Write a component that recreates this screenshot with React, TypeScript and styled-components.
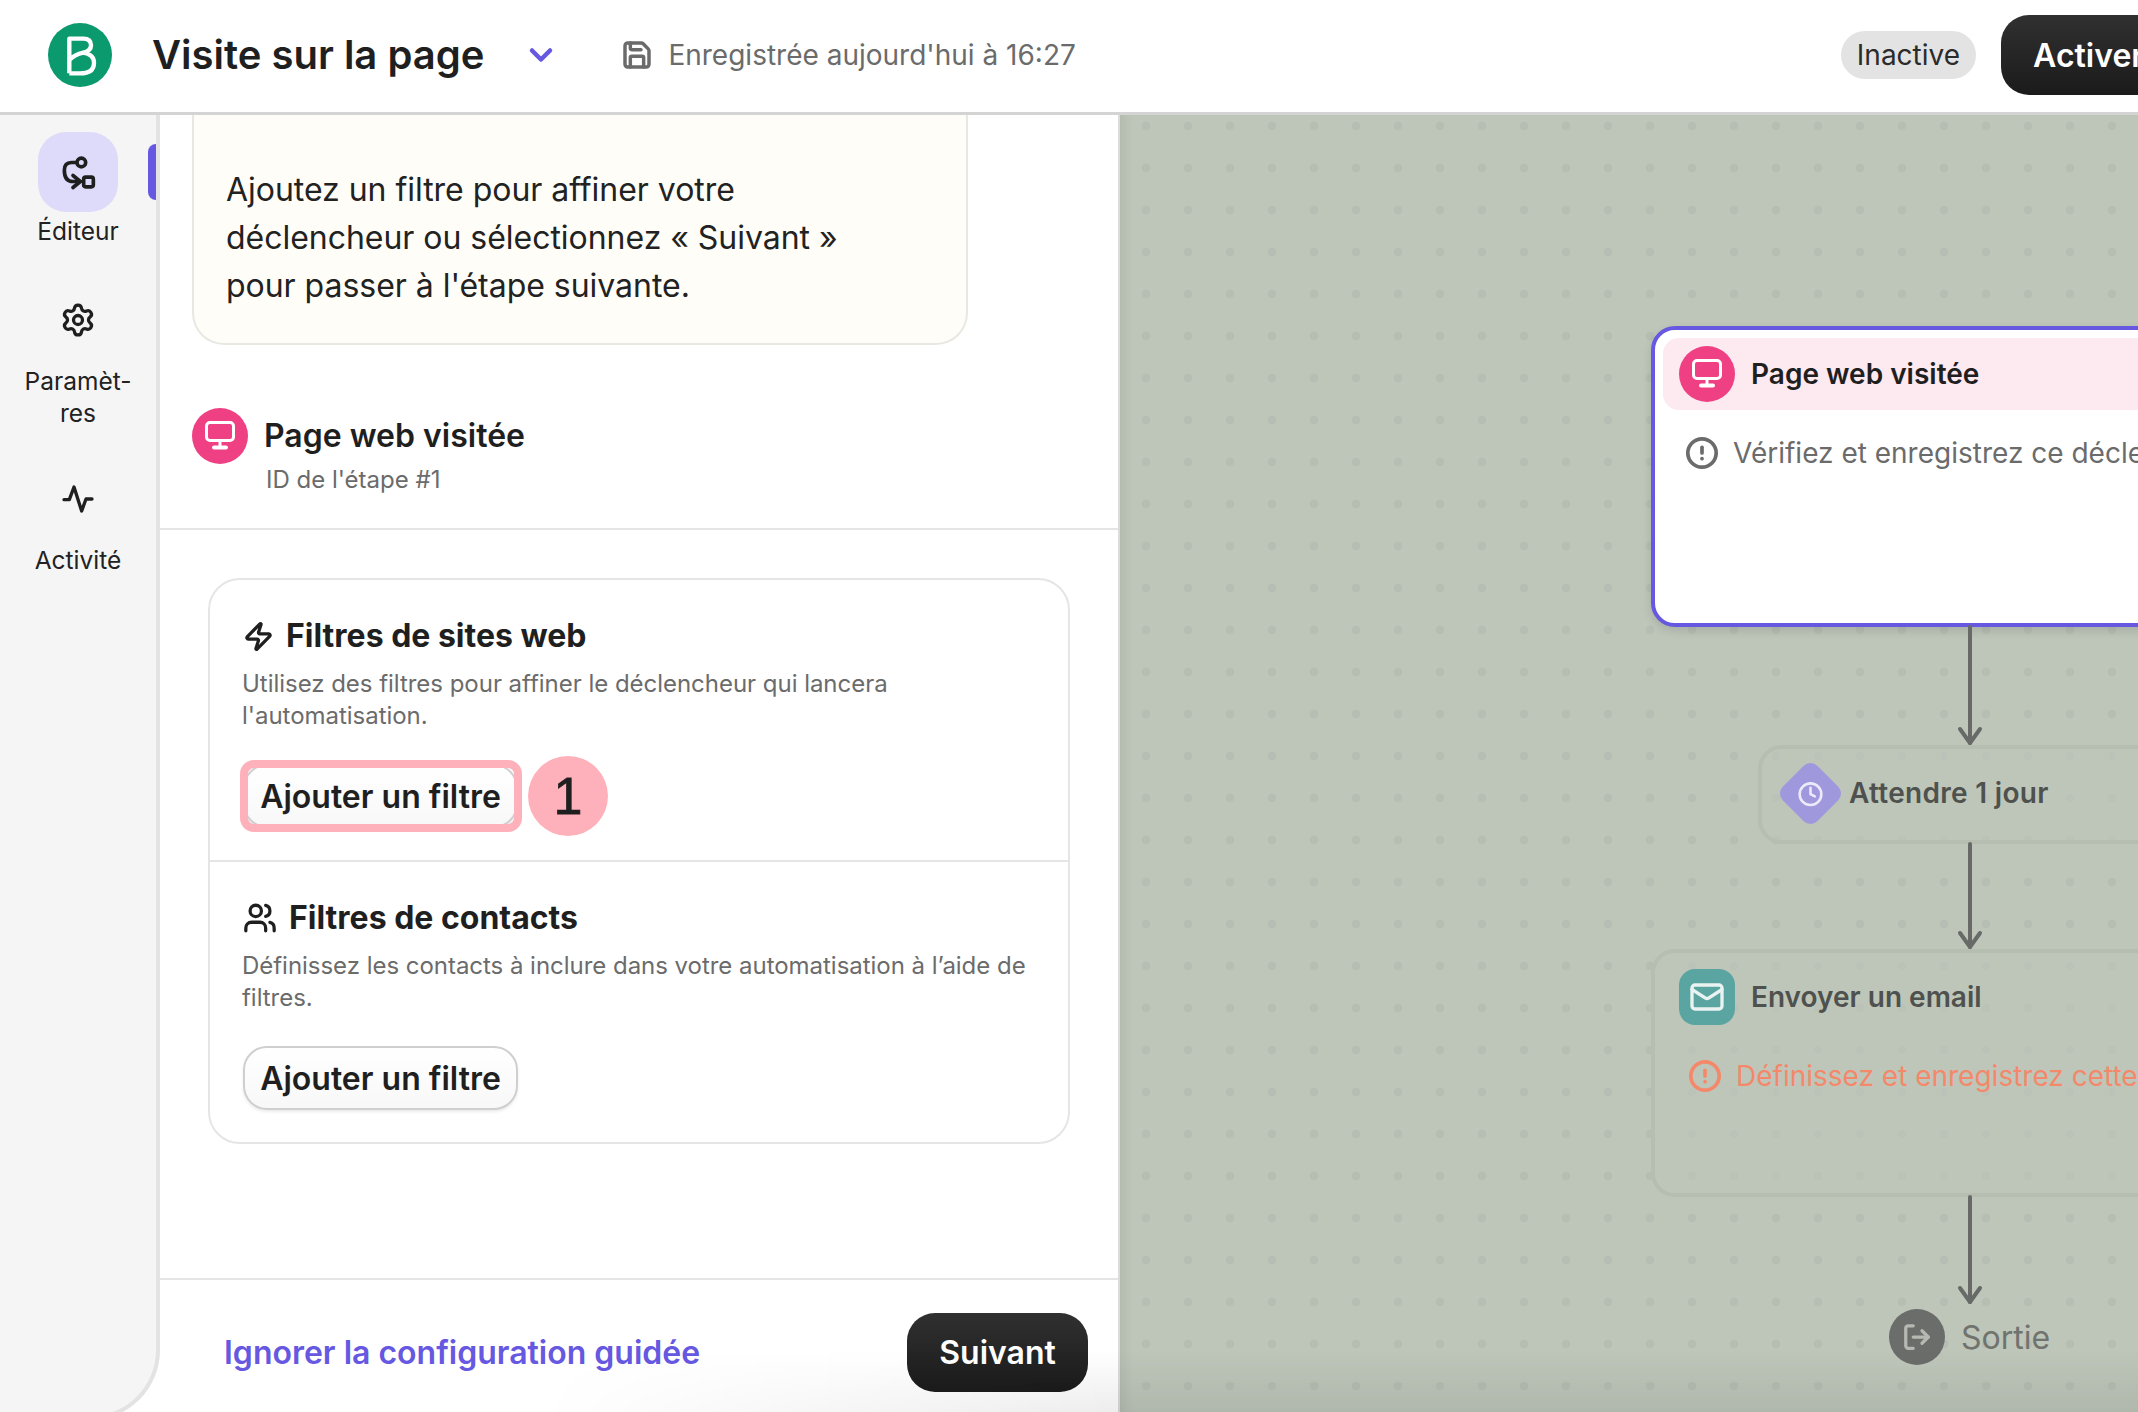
import styled, { createGlobalStyle } from "styled-components";
import { ChevronDown, CircleAlert, Clock, LogOut, Mail, Save, Settings, Users, Zap } from "lucide-react";

const GlobalStyle = createGlobalStyle`
  html, body {
    margin: 0;
    padding: 0;
    background: #fff;
  }
  body {
    font-family: Inter, "Liberation Sans", sans-serif;
    color: #1f1f1f;
  }
  * {
    box-sizing: border-box;
  }
`;

const Page = styled.div`
  position: relative;
  width: 2138px;
  height: 1412px;
  overflow: hidden;
  display: flex;
  flex-direction: column;
`;

const Header = styled.header`
  flex: none;
  height: 115px;
  padding: 0 0 2px 48px;
  display: flex;
  align-items: center;
  background: #fff;
  border-bottom: 3px solid #d4d4d4;
`;

const LogoMark = styled.svg`
  width: 64px;
  height: 64px;
  flex: none;
`;

const PageTitle = styled.h1`
  margin: 0 0 0 40px;
  font-size: 40px;
  line-height: 48px;
  font-weight: 600;
  white-space: nowrap;
`;

const TitleChevron = styled.span`
  display: flex;
  margin-left: 39px;
  color: #6658e0;
`;

const SavedState = styled.div`
  display: flex;
  align-items: center;
  gap: 15px;
  margin-left: 62px;
  font-size: 28px;
  color: #6b6b6b;
  white-space: nowrap;
`;

const HeaderActions = styled.div`
  display: flex;
  align-items: center;
  gap: 25px;
  margin-left: auto;
  margin-right: -38px;
`;

const StatusPill = styled.span`
  height: 48px;
  padding: 0 16px;
  display: flex;
  align-items: center;
  border-radius: 24px;
  background: #e3e3e3;
  font-size: 28px;
  color: #2b2b2b;
`;

const DarkButton = styled.button`
  border: none;
  color: #fff;
  font-family: inherit;
  font-size: 32px;
  font-weight: 600;
  border-radius: 28px;
  background: linear-gradient(#303030, #1b1b1b);
`;

const ActivateButton = styled(DarkButton)`
  height: 80px;
  padding: 0 32px;
`;

const Body = styled.div`
  flex: 1;
  min-height: 0;
  display: flex;
`;

const Sidebar = styled.nav`
  flex: none;
  width: 160px;
  height: 1305px;
  padding-top: 17px;
  display: flex;
  flex-direction: column;
  gap: 30px;
  background: #f5f5f5;
  border-right: 4px solid #e3e3e3;
  border-bottom: 4px solid #e3e3e3;
  border-bottom-right-radius: 70px;
`;

const NavItem = styled.div`
  position: relative;
  display: flex;
  flex-direction: column;
  align-items: center;

  &:first-child {
    margin-bottom: 3px;
  }
`;

const NavIcon = styled.div<{ $active?: boolean }>`
  width: 80px;
  height: 80px;
  display: flex;
  align-items: center;
  justify-content: center;
  border-radius: 28px;
  background: ${(props) => (props.$active ? "#dddbf9" : "transparent")};
  color: #1f1f1f;
`;

const NavLabel = styled.span<{ $tight?: boolean }>`
  margin-top: ${(props) => (props.$tight ? 3 : 5)}px;
  font-size: 24.5px;
  line-height: 32px;
  text-align: center;
  color: #222;
`;

const ActiveMark = styled.span`
  position: absolute;
  right: 0;
  top: 12px;
  width: 8px;
  height: 56px;
  border-radius: 8px 0 0 8px;
  background: #6658e0;
`;

const Panel = styled.main`
  flex: none;
  width: 960px;
  display: flex;
  flex-direction: column;
  background: #fff;
  border-right: 2px solid #dcdcdc;
`;

const PanelScroll = styled.div`
  flex: 1;
  min-height: 0;
`;

const HintCard = styled.div`
  width: 776px;
  height: 230px;
  margin-left: 32px;
  padding: 51px 30px 0 32px;
  background: #fffdf7;
  border: 2px solid #e8e8e3;
  border-top: none;
  border-radius: 0 0 32px 32px;
  font-size: 32px;
  line-height: 48px;
  letter-spacing: -0.03px;
  color: #222;
`;

const StepHead = styled.div`
  margin-top: 63px;
  padding: 0 0 32px 32px;
  display: grid;
  grid-template-columns: 56px 1fr;
  column-gap: 16px;
  border-bottom: 2px solid #e5e5e5;
`;

const StepRound = styled.div`
  width: 56px;
  height: 56px;
  flex: none;
  display: flex;
  align-items: center;
  justify-content: center;
  border-radius: 50%;
  background: #ee4083;
`;

const StepTitle = styled.div`
  font-size: 32px;
  line-height: 56px;
  font-weight: 600;
`;

const StepId = styled.div`
  grid-column: 2;
  margin-left: 2px;
  font-size: 24px;
  line-height: 32px;
  color: #6b6b6b;
`;

const FilterCard = styled.section`
  width: 862px;
  margin: 48px 0 0 48px;
  border: 2px solid #e5e5e5;
  border-radius: 32px;
`;

const FilterBlock = styled.div`
  padding: 36px 33px 32px;

  & + & {
    padding-top: 36px;
    border-top: 2px solid #e5e5e5;
  }
`;

const FilterTitle = styled.h3`
  margin: 0;
  display: flex;
  align-items: center;
  gap: 12px;
  font-size: 32px;
  line-height: 40px;
  font-weight: 700;
`;

const FilterText = styled.p`
  margin: 12px 0 32px -1px;
  font-size: 24px;
  line-height: 32px;
  letter-spacing: -0.03px;
  color: #6b6b6b;
`;

const ButtonSpot = styled.div`
  position: relative;
  display: inline-flex;
`;

const FilterButton = styled.button`
  height: 64px;
  width: 275px;
  border: 2px solid #cfcfcf;
  border-radius: 24px;
  background: linear-gradient(#fff, #f8f8f8);
  box-shadow: 0 2px 3px rgba(0, 0, 0, 0.08);
  font-family: inherit;
  font-size: 32px;
  font-weight: 600;
  color: #1f1f1f;
  white-space: nowrap;
  padding: 0;
`;

const SpotRing = styled.span`
  position: absolute;
  inset: -4px -4px -4px -3px;
  border: 8px solid #ffb1bb;
  border-radius: 14px;
`;

const SpotBadge = styled.span`
  position: absolute;
  left: calc(100% + 10px);
  top: -8px;
  width: 80px;
  height: 80px;
  display: flex;
  align-items: center;
  justify-content: center;
  border-radius: 50%;
  background: #ffb1bb;
  font-family: "Liberation Sans", Arial, sans-serif;
  font-size: 52px;
  color: #1f1f1f;
  -webkit-text-stroke: 0.8px #1f1f1f;
`;

const PanelFooter = styled.footer`
  flex: none;
  height: 134px;
  padding: 12px 30px 0 64px;
  display: flex;
  align-items: center;
  justify-content: space-between;
  border-top: 2px solid #e5e5e5;
`;

const SkipLink = styled.a`
  font-size: 32px;
  font-weight: 600;
  color: #6658e0;
`;

const NextButton = styled(DarkButton)`
  width: 181px;
  height: 79px;
`;

const Canvas = styled.div`
  position: relative;
  flex: 1;
  min-width: 0;
  overflow: hidden;
  background-color: #bec6ba;
  background-image: radial-gradient(circle at center, #b6beb3 0, #b6beb3 4px, transparent 4.6px);
  background-size: 42px 42px;
  background-position: 5px -10px;
  box-shadow: inset 14px 0 12px -10px rgba(0, 0, 0, 0.07);
`;

const FlowNode = styled.div<{ $left: number; $top: number; $width: number; $height: number; $selected?: boolean }>`
  position: absolute;
  left: ${(props) => props.$left}px;
  top: ${(props) => props.$top}px;
  width: ${(props) => props.$width}px;
  height: ${(props) => props.$height}px;
  padding: 8px;
  border: 4px solid ${(props) => (props.$selected ? "#6658e0" : "#b6beb2")};
  border-radius: 24px;
  background: ${(props) => (props.$selected ? "#fff" : "rgba(190, 198, 186, 0.6)")};
  box-shadow: ${(props) => (props.$selected ? "0 4px 10px rgba(0, 0, 0, 0.12)" : "none")};
`;

const NodeHead = styled.div<{ $tinted?: boolean }>`
  height: 72px;
  padding-left: 16px;
  display: flex;
  align-items: center;
  gap: 16px;
  border-radius: 16px;
  background: ${(props) => (props.$tinted ? "#fde9f0" : "transparent")};
`;

const NodeName = styled.span<{ $muted?: boolean }>`
  font-size: 28px;
  font-weight: 600;
  color: ${(props) => (props.$muted ? "#4e514d" : "#1f1f1f")};
  white-space: nowrap;
`;

const WaitName = styled(NodeName)`
  letter-spacing: 0.3px;
`;

const NodeNote = styled.div<{ $tone: string; $indent: number }>`
  height: 40px;
  margin-top: 23px;
  padding-left: ${(props) => props.$indent}px;
  display: flex;
  align-items: center;
  gap: 14px;
  font-size: 28px;
  color: ${(props) => props.$tone};
  white-space: nowrap;
`;

const WaitDiamond = styled.div`
  width: 49px;
  height: 49px;
  flex: none;
  margin: 0 -2px 0 0;
  display: flex;
  align-items: center;
  justify-content: center;
  border-radius: 10px;
  background: #9f98dd;
  color: #eceafa;
  transform: rotate(45deg);

  svg {
    transform: rotate(-45deg);
  }
`;

const MailTile = styled.div`
  width: 56px;
  height: 56px;
  flex: none;
  display: flex;
  align-items: center;
  justify-content: center;
  border-radius: 16px;
  background: #5aa5a1;
  color: #eaf3f2;
`;

const ExitRow = styled.div`
  position: absolute;
  left: 769px;
  top: 1194px;
  display: flex;
  align-items: center;
  gap: 16px;
  font-size: 32px;
  color: #70736e;
`;

const ExitRound = styled.div`
  width: 56px;
  height: 56px;
  display: flex;
  align-items: center;
  justify-content: center;
  border-radius: 50%;
  background: #6b6d6a;
  color: #b5b9b2;
`;

const ArrowLine = styled.svg<{ $top: number; $height: number }>`
  position: absolute;
  left: 838px;
  top: ${(props) => props.$top}px;
  width: 24px;
  height: ${(props) => props.$height}px;
  overflow: visible;
`;

const BottomFade = styled.div`
  position: absolute;
  left: 540px;
  right: 0;
  bottom: 0;
  height: 62px;
  pointer-events: none;
  background: linear-gradient(to top, rgba(0, 0, 0, 0.07), rgba(0, 0, 0, 0));
  mask-image: linear-gradient(to right, transparent, #000 36%);
`;

function BrevoLogo() {
  return (
    <LogoMark viewBox="54 41 192 192">
      <circle cx="150" cy="137" r="96" fill="#0b996e" />
      <path
        d="M118 192 V88 H160 Q183 88 183 108 Q183 125 160 130 Q134 136 118 152 M160 130 Q192 136 192 160 Q192 192 150 192 H118"
        fill="none"
        stroke="#fff"
        strokeWidth="13"
        strokeLinejoin="round"
      />
    </LogoMark>
  );
}

function EditorGlyph() {
  return (
    <svg width="38" height="37" viewBox="176 130 114 110" fill="none" stroke="#1f1f1f" strokeWidth="11" strokeLinecap="round" strokeLinejoin="round">
      <circle cx="243" cy="155" r="13" />
      <path d="M229 155 H213 Q192 156 192 178 Q192 212 218 212 H240" />
      <path d="M218 194 L240 212 L218 230" />
      <rect x="250" y="199" width="29" height="29" rx="6" />
    </svg>
  );
}

function PulseGlyph() {
  return (
    <svg width="32" height="30" viewBox="186 1126 96 88" fill="none" stroke="#1f1f1f" strokeWidth="10" strokeLinecap="round" strokeLinejoin="round">
      <path d="M192 1172 H208 L222 1134 L245 1206 L258 1170 H276" />
    </svg>
  );
}

function ScreenGlyph() {
  return (
    <svg width="32" height="30" viewBox="0 0 32 30" fill="none" stroke="#fff">
      <rect x="2.5" y="1.5" width="27" height="18" rx="3.5" strokeWidth="3" />
      <path d="M16 20 V25" strokeWidth="3" />
      <path d="M10 26.5 H22" strokeWidth="4" strokeLinecap="round" />
    </svg>
  );
}

function FlowArrow({ top, height }: { top: number; height: number }) {
  const tip = height - 2;
  return (
    <ArrowLine $top={top} $height={height} viewBox={`0 0 24 ${height}`} fill="none" stroke="#676a67" strokeWidth="4" strokeLinecap="round" strokeLinejoin="round">
      <path d={`M12 0 V${tip}`} />
      <path d={`M2 ${tip - 14} L12 ${tip} L22 ${tip - 14}`} />
    </ArrowLine>
  );
}

export default function App() {
  return (
    <Page>
      <GlobalStyle />
      <Header>
        <BrevoLogo />
        <PageTitle>Visite sur la page</PageTitle>
        <TitleChevron>
          <ChevronDown size={36} strokeWidth={3} />
        </TitleChevron>
        <SavedState>
          <Save size={32} strokeWidth={2.6} />
          Enregistrée aujourd'hui à 16:27
        </SavedState>
        <HeaderActions>
          <StatusPill>Inactive</StatusPill>
          <ActivateButton>Activer</ActivateButton>
        </HeaderActions>
      </Header>
      <Body>
        <Sidebar>
          <NavItem>
            <NavIcon $active>
              <EditorGlyph />
            </NavIcon>
            <NavLabel $tight>Éditeur</NavLabel>
            <ActiveMark />
          </NavItem>
          <NavItem>
            <NavIcon>
              <Settings size={36} strokeWidth={2.2} />
            </NavIcon>
            <NavLabel>
              Paramèt-
              <br />
              res
            </NavLabel>
          </NavItem>
          <NavItem>
            <NavIcon>
              <PulseGlyph />
            </NavIcon>
            <NavLabel>Activité</NavLabel>
          </NavItem>
        </Sidebar>
        <Panel>
          <PanelScroll>
            <HintCard>
              Ajoutez un filtre pour affiner votre
              <br />
              déclencheur ou sélectionnez « Suivant »
              <br />
              pour passer à l'étape suivante.
            </HintCard>
            <StepHead>
              <StepRound>
                <ScreenGlyph />
              </StepRound>
              <StepTitle>Page web visitée</StepTitle>
              <StepId>ID de l'étape #1</StepId>
            </StepHead>
            <FilterCard>
              <FilterBlock>
                <FilterTitle>
                  <Zap size={31} strokeWidth={2.5} />
                  Filtres de sites web
                </FilterTitle>
                <FilterText>
                  Utilisez des filtres pour affiner le déclencheur qui lancera
                  <br />
                  l'automatisation.
                </FilterText>
                <ButtonSpot>
                  <FilterButton>Ajouter un filtre</FilterButton>
                  <SpotRing />
                  <SpotBadge>1</SpotBadge>
                </ButtonSpot>
              </FilterBlock>
              <FilterBlock>
                <FilterTitle>
                  <Users size={34} strokeWidth={2.3} />
                  Filtres de contacts
                </FilterTitle>
                <FilterText>
                  Définissez les contacts à inclure dans votre automatisation à l’aide de
                  <br />
                  filtres.
                </FilterText>
                <ButtonSpot>
                  <FilterButton>Ajouter un filtre</FilterButton>
                </ButtonSpot>
              </FilterBlock>
            </FilterCard>
          </PanelScroll>
          <PanelFooter>
            <SkipLink>Ignorer la configuration guidée</SkipLink>
            <NextButton>Suivant</NextButton>
          </PanelFooter>
        </Panel>
        <Canvas>
          <FlowNode $left={531} $top={211} $width={638} $height={301} $selected>
            <NodeHead $tinted>
              <StepRound>
                <ScreenGlyph />
              </StepRound>
              <NodeName>Page web visitée</NodeName>
            </NodeHead>
            <NodeNote $tone="#6b6b6b" $indent={22}>
              <CircleAlert size={34} strokeWidth={2.6} />
              Vérifiez et enregistrez ce déclencheur
            </NodeNote>
          </FlowNode>
          <FlowArrow top={512} height={118} />
          <FlowNode $left={638} $top={630} $width={424} $height={99}>
            <NodeHead>
              <WaitDiamond>
                <Clock size={26} strokeWidth={2.4} />
              </WaitDiamond>
              <WaitName $muted>Attendre 1 jour</WaitName>
            </NodeHead>
          </FlowNode>
          <FlowArrow top={729} height={105} />
          <FlowNode $left={531} $top={834} $width={638} $height={248}>
            <NodeHead>
              <MailTile>
                <Mail size={36} strokeWidth={2.2} />
              </MailTile>
              <NodeName $muted>Envoyer un email</NodeName>
            </NodeHead>
            <NodeNote $tone="#f4886a" $indent={25}>
              <CircleAlert size={34} strokeWidth={2.6} />
              Définissez et enregistrez cette étape
            </NodeNote>
          </FlowNode>
          <FlowArrow top={1082} height={107} />
          <ExitRow>
            <ExitRound>
              <LogOut size={30} strokeWidth={2.6} />
            </ExitRound>
            Sortie
          </ExitRow>
        </Canvas>
      </Body>
      <BottomFade />
    </Page>
  );
}
